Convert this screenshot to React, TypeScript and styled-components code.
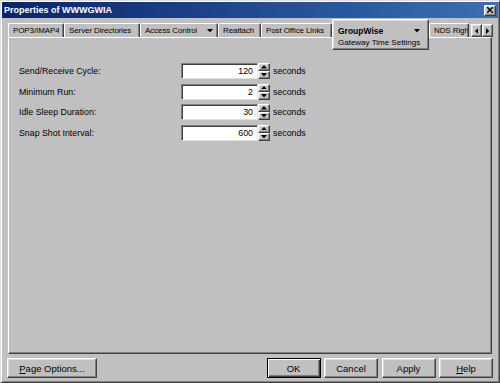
import styled, { createGlobalStyle } from "styled-components";

const GlobalStyle = createGlobalStyle`
    html, body {
        margin: 0;
        padding: 0;
        background: #c0c0c0;
    }
    body {
        font-family: "Liberation Sans", Arial, sans-serif;
        font-size: 8.8px;
        color: #000;
    }
    * {
        box-sizing: border-box;
    }
`

type Dir = "up" | "down" | "left" | "right"

const points: Record<Dir, string> = {
    up: "0,4 3.5,0 7,4",
    down: "0,0 7,0 3.5,4",
    left: "4,0 4,7 0,3.5",
    right: "0,0 0,7 4,3.5",
}

const Arrow = ({dir, size = 7}: { dir: Dir; size?: number }) => {
    const flat = dir === "up" || dir === "down"
    return (
        <svg width={flat ? size : size * 4 / 7} height={flat ? size * 4 / 7 : size}
             viewBox={flat ? "0 0 7 4" : "0 0 4 7"}>
            <polygon points={points[dir]} fill="#000"/>
        </svg>
    )
}

const tabs = [
    {label: "POP3/IMAP4", w: 56},
    {label: "Server Directories", w: 76},
    {label: "Access Control", w: 78, menu: true},
    {label: "Reattach", w: 43},
    {label: "Post Office Links", w: 71},
]

const fields = [
    {label: "Send/Receive Cycle:", value: "120"},
    {label: "Minimum Run:", value: "2"},
    {label: "Idle Sleep Duration:", value: "30"},
    {label: "Snap Shot Interval:", value: "600"},
]

export default function App() {
    return (
        <>
            <GlobalStyle/>
            <Window>
                <TitleBar>
                    <span>Properties of WWWGWIA</span>
                    <CloseButton>
                        <svg width="6" height="6" viewBox="0 0 6 6">
                            <path d="M0 0 L6 6 M6 0 L0 6" stroke="#000" strokeWidth="1.4"/>
                        </svg>
                    </CloseButton>
                </TitleBar>

                <TabStrip>
                    {tabs.map(t => (
                        <Tab key={t.label} $w={t.w}>
                            <span>{t.label}</span>
                            {t.menu && <Arrow dir="down" size={6}/>}
                        </Tab>
                    ))}
                    <ActiveTab>
                        <ActiveHead>
                            <span>GroupWise</span>
                            <Arrow dir="down" size={6}/>
                        </ActiveHead>
                        <SubPage>Gateway Time Settings</SubPage>
                    </ActiveTab>
                    <Tab $w={40} $clip>
                        <span>NDS Rights</span>
                    </Tab>
                    <ScrollPair>
                        <ScrollButton><Arrow dir="left" size={6}/></ScrollButton>
                        <ScrollButton><Arrow dir="right" size={6}/></ScrollButton>
                    </ScrollPair>
                </TabStrip>

                <Panel>
                    <Form>
                        {fields.map(f => (
                            <Row key={f.label}>
                                <Label>{f.label}</Label>
                                <Field>{f.value}</Field>
                                <Spinner>
                                    <SpinHalf><Arrow dir="up" size={6}/></SpinHalf>
                                    <SpinHalf><Arrow dir="down" size={6}/></SpinHalf>
                                </Spinner>
                                <Unit>seconds</Unit>
                            </Row>
                        ))}
                    </Form>
                </Panel>

                <Footer>
                    <Button $w={90}><u>P</u>age Options...</Button>
                    <ButtonGroup>
                        <Button $w={54} $default>OK</Button>
                        <Button $w={54}>Cancel</Button>
                        <Button $w={54}>Apply</Button>
                        <Button $w={54}><u>H</u>elp</Button>
                    </ButtonGroup>
                </Footer>
            </Window>
        </>
    )
}

const raised = `
    border: 1px solid;
    border-color: #fff #404040 #404040 #fff;
    box-shadow: inset -1px -1px #808080, inset 1px 1px #dfdfdf;
`

const Window = styled.div`
    width: 500px;
    height: 383px;
    display: flex;
    flex-direction: column;
    padding: 1px;
    background: #c0c0c0;
    border: 1px solid;
    border-color: #dfdfdf #404040 #404040 #dfdfdf;
    box-shadow: inset 1px 1px #fff, inset -1px -1px #808080;
`

const TitleBar = styled.div`
    height: 16px;
    flex-shrink: 0;
    display: flex;
    align-items: center;
    justify-content: space-between;
    padding: 0 2px 0 2px;
    background: linear-gradient(90deg, #0a246a 0%, #2a58a0 70%, #3d6fb5 100%);
    color: #fff;
    font-weight: bold;
    font-size: 9px;
`

const CloseButton = styled.div`
    width: 12px;
    height: 11px;
    display: flex;
    align-items: center;
    justify-content: center;
    background: #c0c0c0;
    ${raised}
`

const TabStrip = styled.div`
    height: 14px;
    flex-shrink: 0;
    margin: 5px 5px 0 6px;
    display: flex;
    align-items: flex-start;
    position: relative;
    z-index: 1;
    font-size: 8px;
`

const Tab = styled.div<{ $w: number; $clip?: boolean }>`
    width: ${p => p.$w}px;
    height: 14px;
    flex-shrink: 0;
    display: flex;
    align-items: center;
    justify-content: space-between;
    padding: 0 ${p => p.$clip ? 0 : 4}px 0 4px;
    overflow: hidden;
    white-space: nowrap;
    letter-spacing: -0.1px;
    border-top: 1px solid #fff;
    border-left: 1px solid #fff;
    border-right: 1px solid #404040;
    box-shadow: inset -1px 0 #808080;
    border-radius: 2px 2px 0 0;

    span {
        overflow: hidden;
    }
`

const ActiveTab = styled.div`
    width: 97px;
    height: 31px;
    flex-shrink: 0;
    margin-top: -4px;
    padding: 5px 8px 0 5px;
    background: #c0c0c0;
    ${raised}
    border-radius: 2px 2px 0 0;
`

const ActiveHead = styled.div`
    display: flex;
    align-items: center;
    justify-content: space-between;
    height: 12px;
    font-weight: bold;
    font-size: 8.5px;
`

const SubPage = styled.div`
    margin-top: 1px;
    white-space: nowrap;
`

const ScrollPair = styled.div`
    display: flex;
    margin: 1px 0 0 2px;
`

const ScrollButton = styled.div`
    width: 11px;
    height: 13px;
    display: flex;
    align-items: center;
    justify-content: center;
    ${raised}
`

const Panel = styled.div`
    flex: 1;
    margin: 0 6px;
    padding: 25px 0 0 10px;
    border: 1px solid;
    border-color: #fff #404040 #404040 #fff;
    box-shadow: inset -1px -1px #808080;
`

const Form = styled.div`
    display: flex;
    flex-direction: column;
    gap: 4.5px;
`

const Row = styled.div`
    display: flex;
    align-items: center;
    height: 16px;
`

const Label = styled.div`
    width: 162px;
`

const Field = styled.div`
    width: 77px;
    height: 16px;
    padding-right: 4px;
    display: flex;
    align-items: center;
    justify-content: flex-end;
    background: #fff;
    border: 1px solid;
    border-color: #808080 #dfdfdf #dfdfdf #808080;
    box-shadow: inset 1px 1px #404040;
`

const Spinner = styled.div`
    width: 12px;
    height: 16px;
    display: flex;
    flex-direction: column;
`

const SpinHalf = styled.div`
    flex: 1;
    display: flex;
    align-items: center;
    justify-content: center;
    ${raised}
`

const Unit = styled.div`
    margin-left: 3px;
`

const Footer = styled.div`
    height: 27px;
    flex-shrink: 0;
    display: flex;
    justify-content: space-between;
    align-items: flex-start;
    padding: 4px 5px 0 5px;
`

const ButtonGroup = styled.div`
    display: flex;
    gap: 3.5px;
`

const Button = styled.div<{ $w: number; $default?: boolean }>`
    width: ${p => p.$w}px;
    height: 20px;
    display: flex;
    align-items: center;
    justify-content: center;
    font-size: 9.5px;
    border: 1px solid;
    border-color: ${p => p.$default ? "#000" : "#fff #404040 #404040 #fff"};
    box-shadow: ${p => p.$default
            ? "inset 1px 1px #fff, inset -1px -1px #404040, inset -2px -2px #808080"
            : "inset -1px -1px #808080, inset 1px 1px #dfdfdf"};
`
